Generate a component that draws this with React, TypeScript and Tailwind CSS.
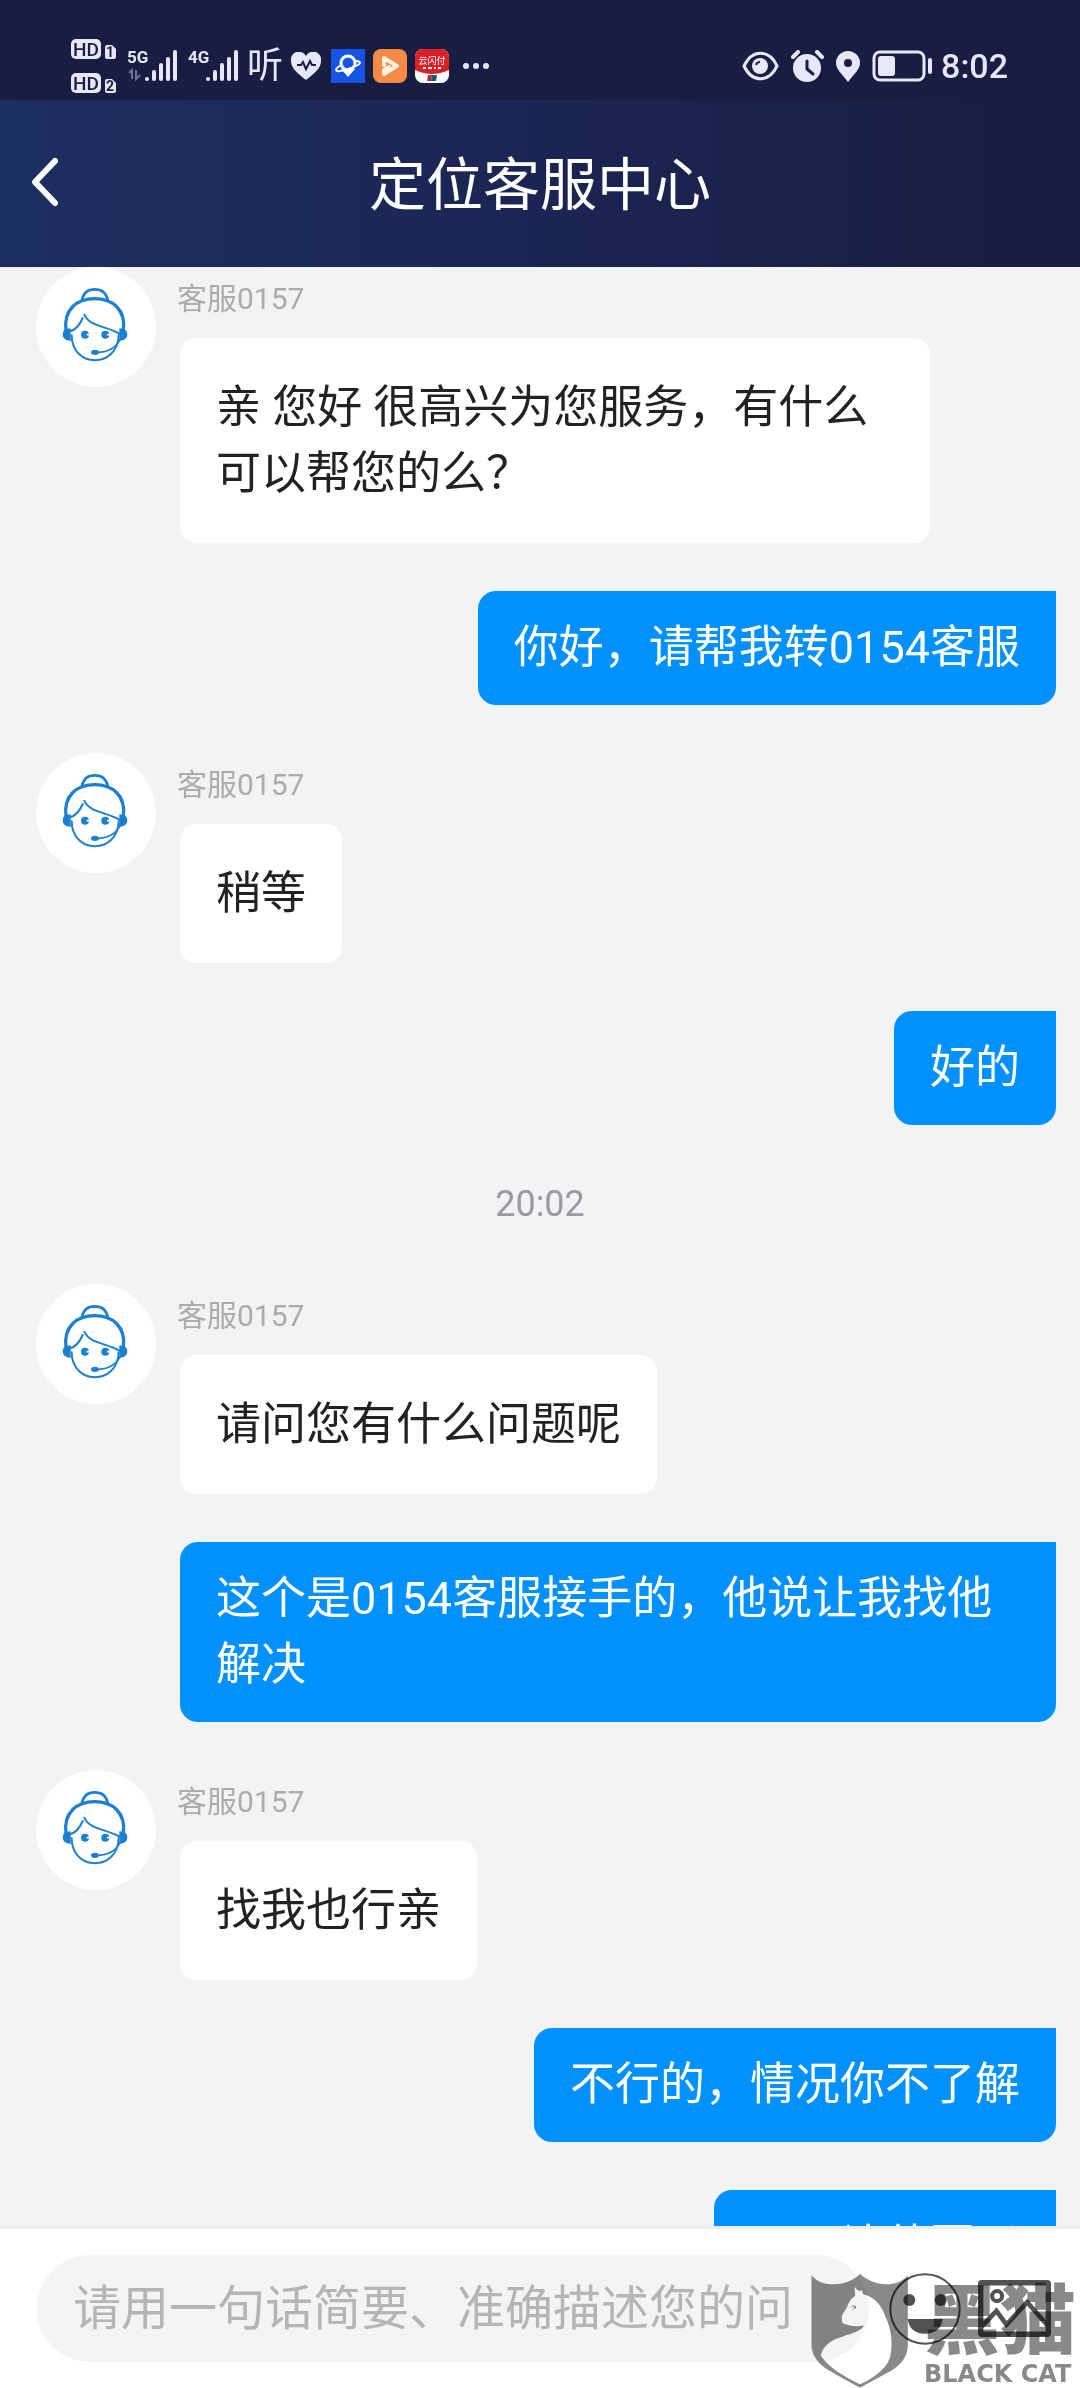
import React, { useState } from 'react';

type Message =
  | { id: number; kind: 'agent'; name: string; text: string }
  | { id: number; kind: 'user'; text: string }
  | { id: number; kind: 'time'; text: string };

const messages: Message[] = [
  { id: 1, kind: 'agent', name: '客服0157', text: '亲 您好 很高兴为您服务，有什么可以帮您的么？' },
  { id: 2, kind: 'user', text: '你好，请帮我转0154客服' },
  { id: 3, kind: 'agent', name: '客服0157', text: '稍等' },
  { id: 4, kind: 'user', text: '好的' },
  { id: 5, kind: 'time', text: '20:02' },
  { id: 6, kind: 'agent', name: '客服0157', text: '请问您有什么问题呢' },
  { id: 7, kind: 'user', text: '这个是0154客服接手的，他说让我找他解决' },
  { id: 8, kind: 'agent', name: '客服0157', text: '找我也行亲' },
  { id: 9, kind: 'user', text: '不行的，情况你不了解' },
  { id: 10, kind: 'user', text: '可以让他回吗' },
];

const HdBadges: React.FC = () => (
  <svg width="46" height="56" viewBox="0 0 46 56" fill="#e6e8fa" fontFamily="Roboto, sans-serif" fontWeight="700">
    {[0, 34].map((y, i) => (
      <g key={y} transform={`translate(0 ${y})`}>
        <rect x="0" y="1" width="30" height="20" rx="5" />
        <text x="15" y="18" fontSize="19" fontWeight="500" textAnchor="middle" fill="#191d41">HD</text>
        <path d="M34 9a2 2 0 0 1 2-2h5l4 4v8a2 2 0 0 1-2 2h-7a2 2 0 0 1-2-2z" />
        <text x="39" y="19" fontSize="14" textAnchor="middle" fill="#191d41">{i + 1}</text>
      </g>
    ))}
  </svg>
);

const Signal: React.FC<{ label: string; arrows?: boolean }> = ({ label, arrows }) => (
  <svg width="52" height="34" viewBox="0 0 52 34" fill="#e6e8fa">
    <text x="0" y="14" fontSize="17" fontWeight="700" fontFamily="'Liberation Sans Narrow', Roboto, sans-serif">{label}</text>
    {arrows && (
      <path d="M2 24l3-3v9M9 21v9l4-4" fill="none" stroke="#6d7093" strokeWidth="2" />
    )}
    <rect x="18" y="28" width="4" height="4" rx="2" />
    <rect x="25" y="21" width="4" height="11" rx="2" />
    <rect x="32" y="14" width="4" height="18" rx="2" />
    <rect x="39" y="8" width="4" height="24" rx="2" />
    <rect x="46" y="1" width="4" height="31" rx="2" />
  </svg>
);

const StatusBar: React.FC = () => (
  <div className="flex h-[100px] shrink-0 items-center bg-[#191d41] pt-8 pl-[71px] pr-[72px] text-[#e6e8fa]">
    <div className="flex items-center">
      <HdBadges />
      <span className="ml-[10px] flex gap-[9px]">
        <Signal label="5G" arrows />
        <Signal label="4G" />
      </span>
      <span className="ml-[7px] text-4xl leading-9">听</span>
      <svg className="ml-2" width="30" height="28" viewBox="0 0 30 28">
        <path d="M15 28C6 21 0 16 0 9a8 8 0 0 1 15-5A8 8 0 0 1 30 9c0 7-6 12-15 19z" fill="#e6e8fa" />
        <path d="M6 13h4l2-3 3 7 4-8 2 4h4" fill="none" stroke="#191d41" strokeWidth="2" />
      </svg>
      <svg className="ml-[10px]" width="34" height="34" viewBox="0 0 34 34">
        <rect width="34" height="34" fill="#1553e6" />
        <path d="M17 28l-7-8h14z" fill="#fff" />
        <circle cx="17" cy="14" r="7" fill="#1553e6" stroke="#fff" strokeWidth="3" />
        <path d="M10 16c-5 3-6 5-4 6 4 1 22-5 23-8 0-2-2-2-4-2" fill="none" stroke="#fff" strokeWidth="2" />
      </svg>
      <svg className="ml-2" width="34" height="34" viewBox="0 0 34 34">
        <rect width="34" height="34" rx="8" fill="#f48a43" />
        <path d="M11 16V9l13 8-13 8v-4l5-3" fill="none" stroke="#fff3df" strokeWidth="4" strokeLinejoin="round" strokeLinecap="round" />
      </svg>
      <svg className="ml-2" width="34" height="34" viewBox="0 0 34 34">
        <rect width="34" height="34" rx="8" fill="#fff" />
        <path d="M0 8a8 8 0 0 1 8-8h18a8 8 0 0 1 8 8v13q-17 8-34 0z" fill="#dd2027" />
        <text x="17" y="15" fontSize="9" textAnchor="middle" fill="#fff">云闪付</text>
        <path d="M8 19h3m2 0h4m2 0h2m2 0h3" stroke="#fff" strokeWidth="2" />
        <path d="M13 26h4l-1 6h-4z" fill="#a8323d" />
        <path d="M17 26h5l-1 6h-5z" fill="#17596c" />
      </svg>
      <svg className="ml-[14px]" width="26" height="6" viewBox="0 0 26 6" fill="#e6e8fa">
        <circle cx="3" cy="3" r="3" />
        <circle cx="13" cy="3" r="3" />
        <circle cx="23" cy="3" r="3" />
      </svg>
    </div>

    <div className="ml-auto flex items-center">
      <svg width="37" height="30" viewBox="0 0 37 30">
        <path d="M2 15C10-2 27-2 35 15 27 32 10 32 2 15z" fill="none" stroke="#e6e8fa" strokeWidth="3" />
        <circle cx="18" cy="15" r="8" fill="#e6e8fa" />
        <path d="M14 14q1-3 4-3" fill="none" stroke="#191d41" strokeWidth="2" />
      </svg>
      <svg className="ml-3" width="33" height="32" viewBox="0 0 33 32">
        <circle cx="16" cy="18" r="14" fill="#e6e8fa" />
        <path d="M2 7l5-5M31 7l-5-5" stroke="#e6e8fa" strokeWidth="4" strokeLinecap="round" />
        <path d="M16 11v8l6 5" fill="none" stroke="#191d41" strokeWidth="3" strokeLinecap="round" />
      </svg>
      <svg className="ml-3" width="24" height="31" viewBox="0 0 24 31">
        <path d="M12 31C5 22 0 18 0 12a12 12 0 0 1 24 0c0 6-5 10-12 19z" fill="#e6e8fa" />
        <circle cx="12" cy="12" r="4" fill="#191d41" />
      </svg>
      <svg className="ml-3" width="61" height="32" viewBox="0 0 61 32">
        <rect x="2" y="2" width="50" height="28" rx="6" fill="none" stroke="#e6e8fa" strokeWidth="3" />
        <rect x="6" y="6" width="17" height="20" rx="3" fill="#e6e8fa" />
        <path d="M58 10v12" stroke="#e6e8fa" strokeWidth="4" strokeLinecap="round" />
      </svg>
      <span className="ml-2 text-[34px] font-medium leading-9">8:02</span>
    </div>
  </div>
);

const Header: React.FC = () => (
  <header className="grid h-[167px] shrink-0 grid-cols-[120px_1fr_120px] items-center bg-linear-to-r from-[#1c2f61] via-[#1b2553] to-[#1a1c40]">
    <button aria-label="返回" className="flex h-full items-center pb-1 pl-[30px]">
      <svg width="30" height="50" viewBox="0 0 30 50">
        <path d="M25 4L5 25l20 21" fill="none" stroke="#fff" strokeWidth="6" strokeLinecap="round" strokeLinejoin="round" />
      </svg>
    </button>
    <h1 className="pt-1 text-center text-[57px] leading-[72px] text-white">定位客服中心</h1>
  </header>
);

const AgentAvatar: React.FC = () => (
  <div className="size-[120px] shrink-0 rounded-full bg-white">
    <svg width="120" height="120" viewBox="0 0 360 360" fill="none" stroke="#1c7fd0" strokeLinecap="round">
      <path d="M138 98Q145 67 176 67Q208 67 215 98" strokeWidth="8" />
      <path d="M90 190C82 128 122 95 176 95S270 128 262 190" strokeWidth="10" />
      <path d="M107 205C108 305 245 305 248 205" strokeWidth="6" />
      <path d="M145 143C162 180 210 176 250 200" strokeWidth="6" />
      <path d="M140 153Q126 186 102 193" strokeWidth="6" />
      <path d="M188 256Q235 254 254 215" strokeWidth="5" />
      <g fill="#1c7fd0" stroke="none">
        <path d="M104 184v38q-24-2-24-20t24-18zM250 184v38q24-2 24-20t-24-18z" />
        <circle cx="147" cy="203" r="12" />
        <circle cx="208" cy="203" r="12" />
        <ellipse cx="177" cy="256" rx="12" ry="8" />
      </g>
      <path d="M154 203h6M215 203h6" stroke="#fff" strokeWidth="5" />
    </svg>
  </div>
);

const AgentMessage: React.FC<{ name: string; text: string }> = ({ name, text }) => (
  <div className="flex items-start pl-9">
    <AgentAvatar />
    <div className="ml-[21px] flex flex-col items-start">
      <div className="h-[71px] pt-2 text-3xl leading-[48px] text-[#aaacae]">{name}</div>
      <p className="ml-[3px] max-w-[750px] rounded-2xl bg-white px-9 pt-[37px] pb-9 text-[45px] leading-[66px] text-[#222]">
        {text}
      </p>
    </div>
  </div>
);

const UserMessage: React.FC<{ text: string }> = ({ text }) => (
  <div className="flex justify-end pr-6">
    <p className="max-w-[876px] rounded-[18px] rounded-tr-none bg-[#0091ff] px-9 py-6 text-[45px] leading-[66px] text-white">
      {text}
    </p>
  </div>
);

const TimeMark: React.FC<{ text: string }> = ({ text }) => (
  <div className="text-center text-4xl leading-[63px] text-[#999b9e]">{text}</div>
);

const Watermark: React.FC = () => (
  <div className="pointer-events-none absolute right-0 bottom-0 flex items-end mix-blend-multiply">
    <svg width="97" height="115" viewBox="0 0 290 345">
      <path
        d="M1 7C20 30 45 34 70 34 100 33 130 20 147 2 165 20 195 33 225 34 250 34 272 28 290 7V215C290 250 270 275 240 293Q180 325 147 344 110 325 50 290C20 272 1 245 1 215Z"
        fill="#8b8889"
      />
      <path
        d="M130 42L142 54 152 52 156 64C190 72 212 98 222 130 240 165 247 215 236 255 224 292 180 318 147 334 110 315 55 288 29 248 38 205 80 195 120 182 138 176 156 168 158 157 140 162 118 160 105 154 96 154 90 146 93 140 88 130 98 118 106 106 112 88 120 76 132 68Z"
        fill="#fff"
      />
      <path d="M121 103q5-8 11-4-3 8-8 11M133 99v8" fill="none" stroke="#8b8889" strokeWidth="3" />
    </svg>
    <div className="ml-4 mr-1 flex flex-col items-start text-[#8b8889]">
      <span className="text-[76px] font-black leading-[76px]">黑猫</span>
      <span className="font-['DejaVu_Sans'] text-2xl font-bold leading-7 whitespace-nowrap">BLACK CAT</span>
    </div>
  </div>
);

const Composer: React.FC = () => {
  const [draft, setDraft] = useState('');

  return (
    <footer className="relative flex shrink-0 items-center border-t-3 border-[#ececee] bg-white py-[26px] pl-[37px] pr-[29px]">
      <textarea
        aria-label="问题描述"
        value={draft}
        onChange={e => setDraft(e.target.value)}
        placeholder="请用一句话简要、准确描述您的问题"
        className="block h-[107px] min-w-0 flex-1 resize-none overflow-hidden rounded-[54px] bg-[#f3f4f6] px-9 pt-[14px] text-5xl leading-[80px] text-[#222] outline-none placeholder:text-[#b4b5b7]"
      />
      <button aria-label="表情" className="ml-5">
        <svg width="72" height="72" viewBox="0 0 216 216" fill="#525253">
          <circle cx="108" cy="108" r="104" fill="none" stroke="#525253" strokeWidth="6" />
          <circle cx="61" cy="81" r="18" />
          <circle cx="155" cy="81" r="18" />
          <path d="M56 138H161Q155 182 108 182 62 182 56 138Z" />
        </svg>
      </button>
      <button aria-label="图片" className="ml-[17px]">
        <svg width="73" height="57" viewBox="0 0 218 170" fill="none" stroke="#525253">
          <rect x="8" y="8" width="202" height="154" rx="3" strokeWidth="16" />
          <circle cx="57" cy="48" r="15" strokeWidth="12" />
          <path d="M10 140L55 92 85 133 147 66 210 138" strokeWidth="14" />
        </svg>
      </button>
      <Watermark />
    </footer>
  );
};

const App: React.FC = () => {
  return (
    <div className="flex h-screen flex-col overflow-hidden bg-[#f2f3f5] font-[Roboto,'Noto_Sans_CJK_SC',sans-serif]">
      <StatusBar />
      <Header />
      <main className="flex min-h-0 flex-1 flex-col gap-12 overflow-hidden">
        {messages.map(m => {
          if (m.kind === 'agent') return <AgentMessage key={m.id} name={m.name} text={m.text} />;
          if (m.kind === 'user') return <UserMessage key={m.id} text={m.text} />;
          return <TimeMark key={m.id} text={m.text} />;
        })}
      </main>
      <Composer />
    </div>
  );
};

export default App;
